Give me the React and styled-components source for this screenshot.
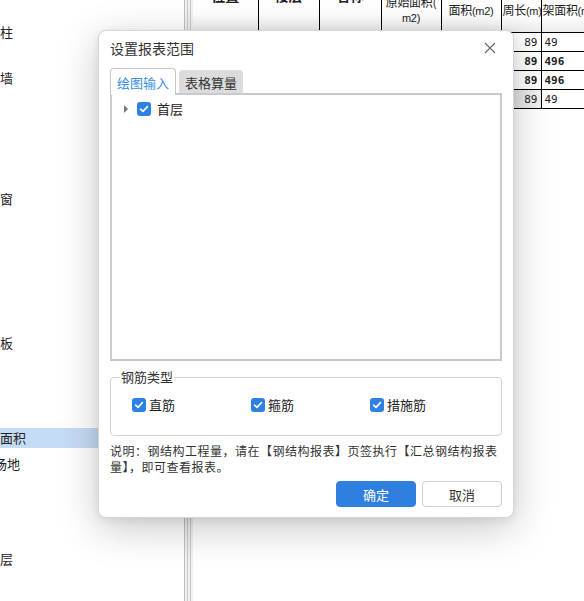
import React from "react";
import styled, { createGlobalStyle } from "styled-components";

const GlobalStyle = createGlobalStyle`
  html, body {
    margin: 0;
    padding: 0;
    background: #fff;
  }
  body {
    font-family: "Noto Sans CJK SC", "Liberation Sans", sans-serif;
    color: #222;
  }
`;

const Page = styled.div`
  position: relative;
  width: 584px;
  height: 601px;
  overflow: hidden;
  display: flex;
  background: #fff;
`;

const SidePanel = styled.div`
  width: 184px;
  flex-shrink: 0;
  background: #fff;
  padding-top: 22px;
  box-sizing: border-box;
`;

const SideItem = styled.div`
  height: 20px;
  line-height: 20px;
  font-size: 13px;
  color: #222;
  margin-top: ${(p) => p.gap}px;
  background: ${(p) => (p.active ? "#c5dcf5" : "transparent")};
  white-space: nowrap;
  overflow: hidden;
  text-indent: ${(p) => p.indent || 0}px;
`;

const Splitter = styled.div`
  width: 8px;
  flex-shrink: 0;
  display: flex;
  border-left: 1px solid #bfbfbf;
  background: #f0f0f0;
  span {
    width: 1px;
    background: #c8c8c8;
    margin-left: 2px;
  }
`;

const TableArea = styled.div`
  flex: 1;
  overflow: hidden;
  background: #fff;
`;

const Grid = styled.table`
  width: 398px;
  border-collapse: collapse;
  table-layout: fixed;
  margin-top: -12px;
  font-family: "Noto Sans CJK SC", "DejaVu Sans Mono", monospace;
  font-size: 12px;
  col.a { width: 65px; }
  col.b { width: 61px; }
  col.c { width: 62px; }
  col.d { width: 60px; }
  col.e { width: 60px; }
  col.f { width: 40px; }
  col.g { width: 50px; }
`;

const HeadCell = styled.th`
  height: 44px;
  padding: 0 1px;
  border-left: 1px solid #000;
  border-bottom: 1px solid #000;
  background: linear-gradient(#fff 60%, #ececec);
  font-weight: ${(p) => (p.bold ? 700 : 400)};
  font-size: ${(p) => (p.bold ? 14 : 12)}px;
  letter-spacing: ${(p) => (p.bold ? 0 : -0.3)}px;
  text-align: ${(p) => p.align || "center"};
  vertical-align: ${(p) => (p.top ? "top" : "middle")};
  line-height: 15px;
  white-space: nowrap;
  overflow: hidden;
  &:first-child { border-left: none; }
`;

const Narrow = styled.span`
  font-family: "Liberation Sans Narrow", "Liberation Sans", sans-serif;
  font-size: 11px;
`;

const Cell = styled.td`
  height: 18px;
  padding: 0 3px;
  border-left: 1px solid ${(p) => (p.blank ? "#d4d4d4" : "#000")};
  border-bottom: 1px solid #000;
  text-align: ${(p) => p.align || "right"};
  font-family: "DejaVu Sans Mono", monospace;
  font-size: 11px;
  font-weight: ${(p) => (p.bold ? 700 : 400)};
  background: ${(p) => (p.shade ? "linear-gradient(90deg, #d8d8d8, #f4f4f4)" : "#fff")};
  white-space: nowrap;
  overflow: hidden;
  &:first-child { border-left: none; }
`;

const Dialog = styled.div`
  position: absolute;
  left: 98px;
  top: 30px;
  width: 416px;
  height: 488px;
  box-sizing: border-box;
  background: #fff;
  border: 1px solid #d6d6d6;
  border-radius: 8px;
  box-shadow: 0 10px 40px rgba(0, 0, 0, 0.22), 0 2px 8px rgba(0, 0, 0, 0.08);
  padding: 0 11px;
  display: flex;
  flex-direction: column;
`;

const TitleBar = styled.div`
  height: 34px;
  display: flex;
  align-items: center;
  justify-content: space-between;
`;

const Title = styled.div`
  font-size: 14px;
  color: #333;
`;

const CloseBtn = styled.button`
  width: 20px;
  height: 20px;
  border: none;
  background: none;
  padding: 0;
  margin-right: 2px;
  display: flex;
  align-items: center;
  justify-content: center;
`;

const TabRow = styled.div`
  display: flex;
  align-items: flex-end;
  gap: 3px;
  margin-top: 2px;
  height: 26px;
`;

const Tab = styled.div`
  height: ${(p) => (p.active ? 27 : 23)}px;
  padding: 0 ${(p) => (p.active ? 6 : 5)}px;
  box-sizing: border-box;
  display: flex;
  align-items: center;
  font-size: 13px;
  color: ${(p) => (p.active ? "#3a8ee6" : "#333")};
  background: ${(p) => (p.active ? "#fff" : "#dcdcdc")};
  border: 1px solid ${(p) => (p.active ? "#c6c6c6" : "#dcdcdc")};
  border-bottom: none;
  border-radius: 4px 4px 0 0;
  position: relative;
  z-index: 1;
  margin-bottom: ${(p) => (p.active ? -2 : 0)}px;
`;

const TreeBox = styled.div`
  height: 268px;
  border: 2px solid #c8cad0;
  box-sizing: border-box;
  padding: 4px 0 0 12px;
`;

const TreeRow = styled.div`
  display: flex;
  align-items: center;
  gap: 6px;
  font-size: 13px;
  color: #222;
`;

const Caret = styled.span`
  width: 0;
  height: 0;
  border-top: 4px solid transparent;
  border-bottom: 4px solid transparent;
  border-left: 4px solid #777;
  margin-right: 3px;
`;

const Box = styled.span`
  width: ${(p) => p.size}px;
  height: ${(p) => p.size}px;
  border-radius: 3px;
  background: #2f80e3;
  display: inline-flex;
  align-items: center;
  justify-content: center;
  flex-shrink: 0;
`;

const Fieldset = styled.fieldset`
  margin: 9px 0 0 0;
  padding: 0 0 0 21px;
  height: 66px;
  box-sizing: border-box;
  border: 1px solid #d2d2d2;
  border-radius: 4px;
  legend {
    font-size: 13px;
    color: #333;
    padding: 0 1px;
    margin-left: -12px;
    line-height: 14px;
  }
`;

const OptRow = styled.div`
  display: grid;
  grid-template-columns: 119px 119px 1fr;
  margin-top: 11px;
`;

const Opt = styled.label`
  display: flex;
  align-items: center;
  gap: 3px;
  font-size: 13px;
  color: #222;
`;

const Note = styled.p`
  margin: 7px 0 0 0;
  font-size: 12px;
  letter-spacing: 0.5px;
  line-height: 16px;
  color: #333;
  width: 392px;
`;

const Footer = styled.div`
  display: flex;
  justify-content: flex-end;
  gap: 6px;
  margin-top: 6px;
`;

const Button = styled.button`
  width: 80px;
  height: 26px;
  border-radius: 4px;
  font-family: inherit;
  font-size: 13px;
  border: 1px solid ${(p) => (p.primary ? "#2e7fe0" : "#cfcfcf")};
  background: ${(p) => (p.primary ? "#2e7fe0" : "#fff")};
  color: ${(p) => (p.primary ? "#fff" : "#333")};
`;

const Check = ({ size = 14 }) => (
  <Box size={size}>
    <svg width={size - 4} height={size - 4} viewBox="0 0 10 10">
      <path d="M1.6 5.2 L4 7.4 L8.4 2.6" fill="none" stroke="#fff" strokeWidth="1.6" strokeLinecap="round" strokeLinejoin="round" />
    </svg>
  </Box>
);

const sideItems = [
  { text: "立柱", gap: 0, indent: -13 },
  { text: "砌体墙", gap: 26, indent: -26 },
  { text: "门窗", gap: 101, indent: -13 },
  { text: "楼板", gap: 124, indent: -13 },
  { text: "建筑面积", gap: 75, indent: -26, active: true },
  { text: "平整场地", gap: 6, indent: -32 },
  { text: "楼层", gap: 75, indent: -13 },
];

const rows = [
  { a: "89", b: "49", bold: false, shade: false },
  { a: "89", b: "496", bold: true, shade: false },
  { a: "89", b: "496", bold: true, shade: false },
  { a: "89", b: "49", bold: false, shade: true },
];

export default function App() {
  return (
    <>
      <GlobalStyle />
      <Page>
        <SidePanel>
          {sideItems.map((it) => (
            <SideItem key={it.text} gap={it.gap} indent={it.indent} active={it.active}>
              {it.text}
            </SideItem>
          ))}
        </SidePanel>
        <Splitter>
          <span />
          <span />
        </Splitter>
        <TableArea>
          <Grid>
            <colgroup>
              <col className="a" />
              <col className="b" />
              <col className="c" />
              <col className="d" />
              <col className="e" />
              <col className="f" />
              <col className="g" />
            </colgroup>
            <thead>
              <tr>
                <HeadCell bold top>位置</HeadCell>
                <HeadCell bold top>楼层</HeadCell>
                <HeadCell bold top>名称</HeadCell>
                <HeadCell>
                  原始面积(
                  <br />
                  <Narrow>m2)</Narrow>
                </HeadCell>
                <HeadCell>
                  面积<Narrow>(m2)</Narrow>
                </HeadCell>
                <HeadCell>
                  周长<Narrow>(m)</Narrow>
                </HeadCell>
                <HeadCell align="left">
                  架面积<Narrow>(m2)</Narrow>
                </HeadCell>
              </tr>
            </thead>
            <tbody>
              {rows.map((r, i) => (
                <tr key={i}>
                  <Cell blank />
                  <Cell blank />
                  <Cell blank />
                  <Cell blank />
                  <Cell blank />
                  <Cell bold={r.bold} shade={r.shade}>{r.a}</Cell>
                  <Cell bold={r.bold} align="left">{r.b}</Cell>
                </tr>
              ))}
            </tbody>
          </Grid>
        </TableArea>

        <Dialog>
          <TitleBar>
            <Title>设置报表范围</Title>
            <CloseBtn aria-label="close">
              <svg width="12" height="12" viewBox="0 0 12 12">
                <path d="M1 1 L11 11 M11 1 L1 11" stroke="#666" strokeWidth="1.1" />
              </svg>
            </CloseBtn>
          </TitleBar>
          <TabRow>
            <Tab active>绘图输入</Tab>
            <Tab>表格算量</Tab>
          </TabRow>
          <TreeBox>
            <TreeRow>
              <Caret />
              <Check size={14} />
              <span>首层</span>
            </TreeRow>
          </TreeBox>
          <Fieldset>
            <legend>钢筋类型</legend>
            <OptRow>
              <Opt>
                <Check size={14} />
                直筋
              </Opt>
              <Opt>
                <Check size={14} />
                箍筋
              </Opt>
              <Opt>
                <Check size={14} />
                措施筋
              </Opt>
            </OptRow>
          </Fieldset>
          <Note>说明：钢结构工程量，请在【钢结构报表】页签执行【汇总钢结构报表量】，即可查看报表。</Note>
          <Footer>
            <Button primary>确定</Button>
            <Button>取消</Button>
          </Footer>
        </Dialog>
      </Page>
    </>
  );
}
